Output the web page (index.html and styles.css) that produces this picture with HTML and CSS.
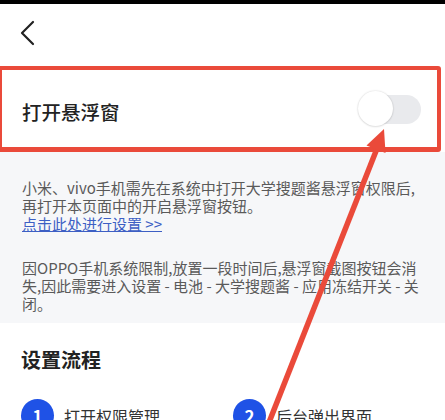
FILE: index.html
```html
<!DOCTYPE html>
<html lang="zh-CN">
<head>
<meta charset="utf-8">
<link rel="stylesheet" href="styles.css">
</head>
<body>
<div class="page">
  <div class="statusbar"></div>
  <div class="nav">
    <svg class="back" width="16" height="26" viewBox="0 0 16 26"><polyline points="13,2 2,13 13,24" fill="none" stroke="#222" stroke-width="2.2" stroke-linecap="round" stroke-linejoin="round"/></svg>
  </div>
  <div class="row">
    <span class="row-title">打开悬浮窗</span>
    <span class="switch"><span class="knob"></span></span>
  </div>
  <div class="notice">
    <p class="p1">小米、vivo手机需先在系统中打开大学搜题酱悬浮窗权限后,<br>再打开本页面中的开启悬浮窗按钮。<br><a class="link">点击此处进行设置 &gt;&gt;</a></p>
    <p class="p2">因OPPO手机系统限制,放置一段时间后,悬浮窗截图按钮会消失,因此需要进入设置 - 电池 - 大学搜题酱 - 应用冻结开关 - 关闭。</p>
  </div>
  <div class="section">
    <div class="section-title">设置流程</div>
    <div class="steps">
      <div class="step"><span class="num">1</span><span class="step-text">打开权限管理</span></div>
      <div class="step"><span class="num">2</span><span class="step-text">后台弹出界面</span></div>
    </div>
  </div>
  <div class="redbox"></div>
  <svg class="arrow" width="445" height="420" viewBox="0 0 445 420">
    <line x1="378" y1="146" x2="266" y2="430" stroke="#ea4a3a" stroke-width="5.5"/>
    <polygon points="384,129 366.5,145.5 385.5,153" fill="#ea4a3a"/>
  </svg>
</div>
</body>
</html>
```

FILE: styles.css
```css
html, body {
  margin: 0;
  padding: 0;
  background: #fff;
}
body {
  font-family: "Noto Sans CJK SC", "Noto Sans", sans-serif;
  width: 445px;
  height: 420px;
  overflow: hidden;
}
.page {
  position: relative;
  width: 445px;
  height: 420px;
  overflow: hidden;
}
.statusbar {
  height: 4px;
  background: #000;
}
.nav {
  height: 62px;
  display: flex;
  align-items: center;
  padding-left: 20px;
  box-sizing: border-box;
  padding-bottom: 5px;
}
.back {
  display: block;
}
.row {
  height: 86px;
  display: flex;
  align-items: center;
  justify-content: space-between;
  padding: 0 22px;
  box-sizing: border-box;
  background: #fff;
}
.row-title {
  font-size: 19.5px;
  font-weight: 500;
  color: #222;
  padding-top: 5px;
}
.switch {
  position: relative;
  width: 62px;
  height: 29px;
  border-radius: 15px;
  background: #e9eaed;
  margin-right: 2px;
}
.knob {
  position: absolute;
  left: -1px;
  top: -4px;
  width: 35px;
  height: 35px;
  border-radius: 50%;
  background: #fff;
  box-shadow: 0 0 2px rgba(0,0,0,0.18), 0 1px 2px rgba(0,0,0,0.08);
}
.notice {
  background: #f6f7f9;
  padding: 27px 20px 10px 22px;
  color: #5a5a5a;
  font-size: 15px;
}
.notice p {
  margin: 0;
}
.p1 {
  line-height: 18px;
}
.p2 {
  margin-top: 26px !important;
  line-height: 18px;
}
.link {
  color: #3d5fc4;
  text-decoration: underline;
}
.section {
  padding: 23px 22px 0 21px;
}
.section-title {
  font-size: 20px;
  font-weight: 700;
  color: #222;
  line-height: 28px;
}
.steps {
  display: flex;
  margin-top: 25px;
}
.step {
  display: flex;
  align-items: center;
  width: 212px;
  flex: none;
}
.num {
  width: 33px;
  height: 33px;
  border-radius: 50%;
  background: #1f52e6;
  color: #fff;
  font-weight: 700;
  font-size: 17px;
  display: flex;
  align-items: center;
  justify-content: center;
  flex: none;
}
.step-text {
  margin-left: 10px;
  font-size: 16px;
  color: #333;
}
.redbox {
  position: absolute;
  left: -2px;
  top: 66px;
  width: 443px;
  height: 86px;
  box-sizing: border-box;
  border: 4px solid #ea4a3a;
  border-bottom-width: 5px;
  border-radius: 3px;
}
.arrow {
  position: absolute;
  left: 0;
  top: 0;
  pointer-events: none;
}
```
